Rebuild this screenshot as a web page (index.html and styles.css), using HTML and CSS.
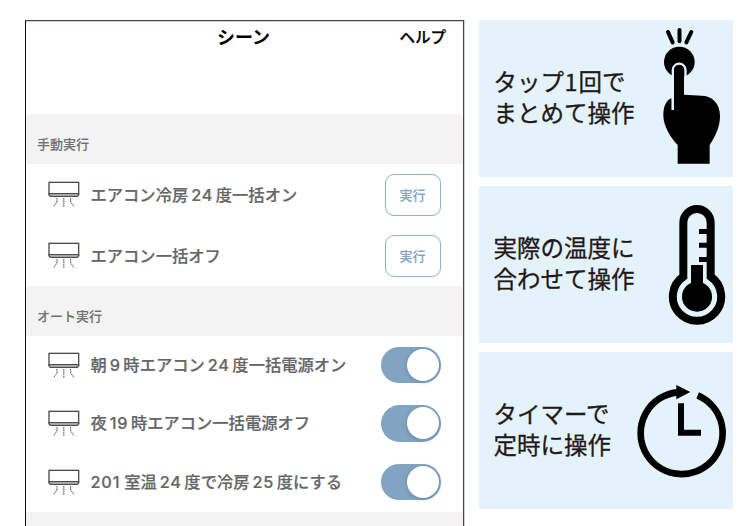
FILE: index.html
```
<!DOCTYPE html>
<html lang="ja">
<head>
  <meta charset="UTF-8">
  <title>シーン</title>
  <link rel="stylesheet" href="styles.css">
</head>
<body>
  <svg class="symbols">
    <symbol id="aircon" viewBox="0 0 96 80">
      <rect x="3" y="4" width="89" height="35" fill="none" stroke="#4c4c4c" stroke-width="4"/>
      <path d="M3 38v4l4 4h81l4-4v-4z" fill="#c4c4c4" stroke="#4c4c4c" stroke-width="3.5"/>
      <path d="M27 51v12l-10 14M47.500 51v26M68 51v12l10 14" fill="none" stroke="#4c4c4c" stroke-width="3" stroke-dasharray="5 2"/>
    </symbol>
  </svg>

  <div class="container">
    <div class="phone">
      <div class="header">
        <h1>シーン</h1>
        <a class="help">ヘルプ</a>
      </div>

      <div class="section-title">手動実行</div>
      <div class="scene manual">
        <svg class="icon"><use href="#aircon"/></svg>
        <p>エアコン冷房<span class="num">24</span>度一括オン</p>
        <button>実行</button>
      </div>
      <div class="scene manual">
        <svg class="icon"><use href="#aircon"/></svg>
        <p>エアコン一括オフ</p>
        <button>実行</button>
      </div>

      <div class="section-title">オート実行</div>
      <div class="scene auto">
        <svg class="icon"><use href="#aircon"/></svg>
        <p>朝<span class="num">9</span>時エアコン<span class="num">24</span>度一括電源オン</p>
        <div class="toggle"></div>
      </div>
      <div class="scene auto">
        <svg class="icon"><use href="#aircon"/></svg>
        <p>夜<span class="num">19</span>時エアコン一括電源オフ</p>
        <div class="toggle"></div>
      </div>
      <div class="scene auto">
        <svg class="icon"><use href="#aircon"/></svg>
        <p><span class="num first">201</span>室温<span class="num">24</span>度で冷房<span class="num">25</span>度にする</p>
        <div class="toggle"></div>
      </div>
      <div class="section-title"></div>
    </div>

    <div class="cards">
      <div class="card">
        <p>タップ<span class="one">1</span>回で<br>まとめて操作</p>
        <svg class="picture" viewBox="564 30 210 471">
          <path d="M579 66l14 31M613.500 60v34M649 66l-15 31" stroke="#000" stroke-width="12" stroke-linecap="round"/>
          <circle cx="613" cy="156" r="46"/>
          <path d="M590 265C574 270 565 288 565 316C565 350 588 385 608 405V461H704V405C722 377 735 350 735 318C735 280 711 257 680 257L627 254V300H590z"/>
          <path d="M593.500 300V180a19 19 0 0 1 38 0V252" fill="none" stroke="#e4f3fb" stroke-width="7"/>
          <path d="M597 310V180a15 15 0 0 1 30 0v130z"/>
        </svg>
      </div>
      <div class="card">
        <p>実際の温度に<br>合わせて操作</p>
        <svg class="picture" viewBox="564 18 210 471">
          <path d="M625 290V128a41 41 0 0 1 82 0V290A72.500 72.500 0 1 1 625 290z" fill="none" stroke="#000" stroke-width="24"/>
          <circle cx="666" cy="350" r="45"/>
          <path d="M648 255h36v60h-36zM672 147h30v15h-30zM672 188h30v15h-30zM672 231h30v15h-30z"/>
        </svg>
      </div>
      <div class="card">
        <p>タイマーで<br>定時に操作</p>
        <svg class="picture wide" viewBox="462 22 312 471">
          <path d="M668 152A123 123 0 1 1 606 143" fill="none" stroke="#000" stroke-width="20"/>
          <path d="M604 121l42 21-42 22z"/>
          <path d="M618 176v88h60" fill="none" stroke="#000" stroke-width="18"/>
        </svg>
      </div>
    </div>
  </div>
</body>
</html>
```
FILE: styles.css
```
body {
  margin: 0;
  background-color: #ffffff;
  font-family: Inter, "Noto Sans CJK JP", sans-serif;
  overflow: hidden;
}

h1, p {
  margin: 0;
}

.symbols {
  display: none;
}

.container {
  display: flex;
  align-items: flex-start;
  gap: 15px;
  height: 506px;
  padding: 20px 0 0 25px;
  overflow: hidden;
}

.phone {
  box-sizing: border-box;
  width: 439px;
  height: 520px;
  border: 1px solid #4f4141;
  border-left-color: #150b0b;
  box-shadow: 1px 0 #d5d0d0, inset 0 1px #d5d0d0;
  overflow: hidden;
}

.header {
  display: grid;
  grid-template-columns: 1fr auto 1fr;
  align-items: center;
  height: 34px;
  padding: 0 17px 59px 15px;
}

.header h1 {
  grid-column: 2;
  font-size: 18px;
  line-height: 34px;
  color: #000000;
}

.help {
  justify-self: end;
  font-size: 15.5px;
  font-weight: 500;
  line-height: 34px;
  color: #000000;
  -webkit-text-stroke: 0.25px #000000;
}

.section-title {
  box-sizing: border-box;
  height: 50px;
  padding: 10px 0 0 11px;
  background-color: #f3f3f3;
  border-radius: 3px;
  font-size: 13px;
  font-weight: 500;
  line-height: 40px;
  color: #717171;
  -webkit-text-stroke: 0.1px #717171;
}

.scene {
  display: flex;
  align-items: center;
  box-sizing: border-box;
  padding: 0 22px;
}

.manual {
  height: 61px;
}

.auto {
  height: 58.67px;
  padding-bottom: 1px;
}

.scene .icon {
  flex: none;
  width: 32px;
  height: 26.67px;
}

.scene p {
  flex: 1;
  margin-left: 10.5px;
  font-size: 16.3px;
  font-weight: 500;
  line-height: 24px;
  color: #666666;
  white-space: nowrap;
  -webkit-text-stroke: 0.2px #666666;
}

.num {
  margin: 0 2.5px 0 3px;
  letter-spacing: 0.8px;
}

.num.first {
  margin: 0 4px 0 0;
}

.scene button {
  box-sizing: border-box;
  width: 56px;
  height: 42px;
  padding: 0 1px 1px 0;
  border: 1px solid #8fb0cf;
  border-radius: 9px;
  background-color: #ffffff;
  font-family: inherit;
  font-size: 13px;
  font-weight: 500;
  color: #7fa4c4;
  -webkit-text-stroke: 0.1px #7fa4c4;
}

.toggle {
  display: flex;
  justify-content: flex-end;
  align-items: center;
  box-sizing: border-box;
  width: 60px;
  height: 36.5px;
  padding-right: 2.5px;
  border-radius: 19px;
  background-color: #80a4c2;
}

.toggle::after {
  content: "";
  width: 32px;
  height: 32px;
  border-radius: 50%;
  background-color: #ffffff;
  box-shadow: 0 1px 4px rgba(50, 80, 120, 0.35);
}

.cards {
  display: grid;
  gap: 9px;
}

.card {
  display: flex;
  align-items: center;
  box-sizing: border-box;
  width: 254px;
  height: 157px;
  padding-left: 14.5px;
  background-color: #e4f3fb;
}

.card p {
  padding-bottom: 3px;
  font-family: "Noto Sans CJK JP", sans-serif;
  font-size: 23.5px;
  line-height: 31px;
  color: #231815;
  white-space: nowrap;
  -webkit-text-stroke: 0.3px #231815;
}

.one {
  margin: 0 1px 0 0.5px;
}

.picture {
  flex: none;
  width: 70px;
  height: 157px;
  margin-left: auto;
}

.picture.wide {
  width: 104px;
}
```
